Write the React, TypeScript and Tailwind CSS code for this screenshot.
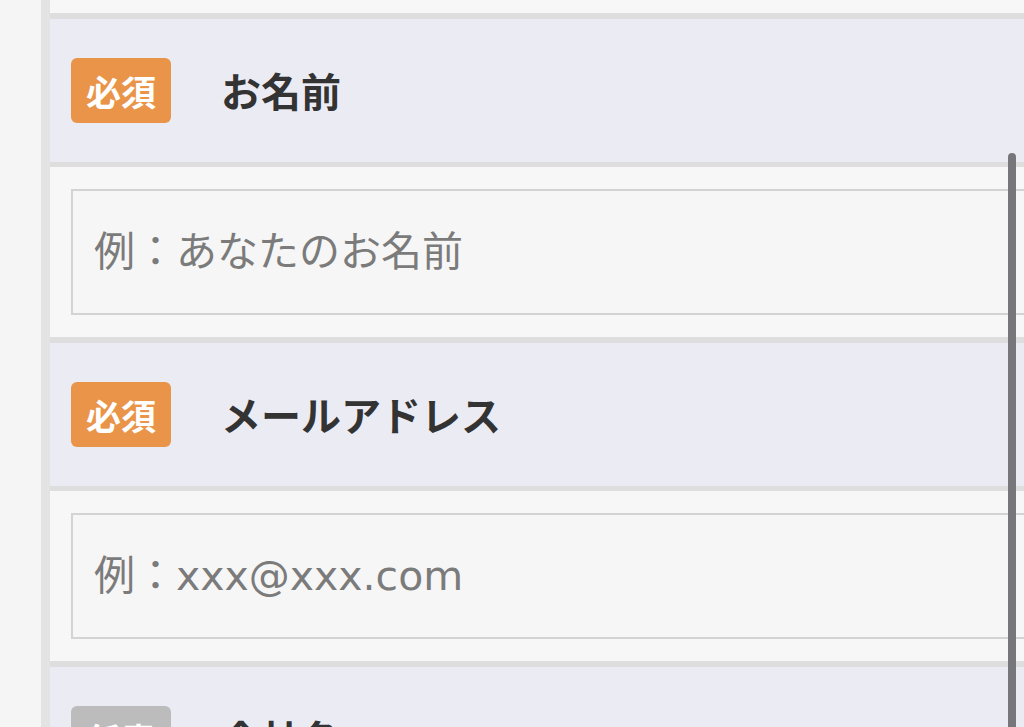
const FIELDS = [
  { label: 'お名前', required: true, placeholder: '例：あなたのお名前' },
  { label: 'メールアドレス', required: true, placeholder: '例：xxx@xxx.com' },
  { label: '会社名', required: false, placeholder: '例：株式会社〇〇' },
];

function Badge({ required }: { required: boolean }) {
  return (
    <span
      className={`flex h-[65px] w-[100px] shrink-0 items-center justify-center rounded-[6px] text-[35px] font-bold leading-none text-white ${
        required ? 'bg-[#e99448]' : 'bg-[#bcbcbc]'
      }`}
    >
      {required ? '必須' : '任意'}
    </span>
  );
}

export default function App() {
  return (
    <div
      className="relative flex h-[727px] w-[1024px] overflow-hidden bg-[#f5f5f5]"
      style={{ fontFamily: '"Noto Sans CJK JP", "Noto Sans", sans-serif' }}
    >
      <div className="w-[41px] shrink-0" />
      <div className="w-[9px] shrink-0 bg-[#e3e3e3]" />

      <main className="min-w-0 flex-1 overflow-hidden">
        {/* tail of the previous field */}
        <div className="h-[19px] border-b-[6px] border-[#dedede] bg-[#f7f7f7]" />

        {FIELDS.map((f) => (
          <section key={f.label} className="border-b-[6px] border-[#dedede]">
            <div className="flex h-[148px] items-center gap-[50px] border-b-[5px] border-[#dedede] bg-[#ebebf3] pl-[21px]">
              <Badge required={f.required} />
              <span className="pb-[2px] text-[40px] font-bold text-[#333333]">{f.label}</span>
            </div>
            <div className="bg-[#f7f7f7] py-[22px] pl-[21px]">
              <input
                type="text"
                placeholder={f.placeholder}
                className="h-[126px] w-[1000px] border-2 border-[#d3d3d3] bg-[#f6f6f6] px-[21px] font-['DejaVu_Sans','Noto_Sans_CJK_JP',sans-serif] text-[41px] text-[#333333] outline-none placeholder:text-[#7b7b7b]"
              />
            </div>
          </section>
        ))}
      </main>

      {/* scroll indicator */}
      <div className="absolute right-[8px] top-[153px] h-[640px] w-[8px] rounded-full bg-[#77777b]" />
    </div>
  );
}
